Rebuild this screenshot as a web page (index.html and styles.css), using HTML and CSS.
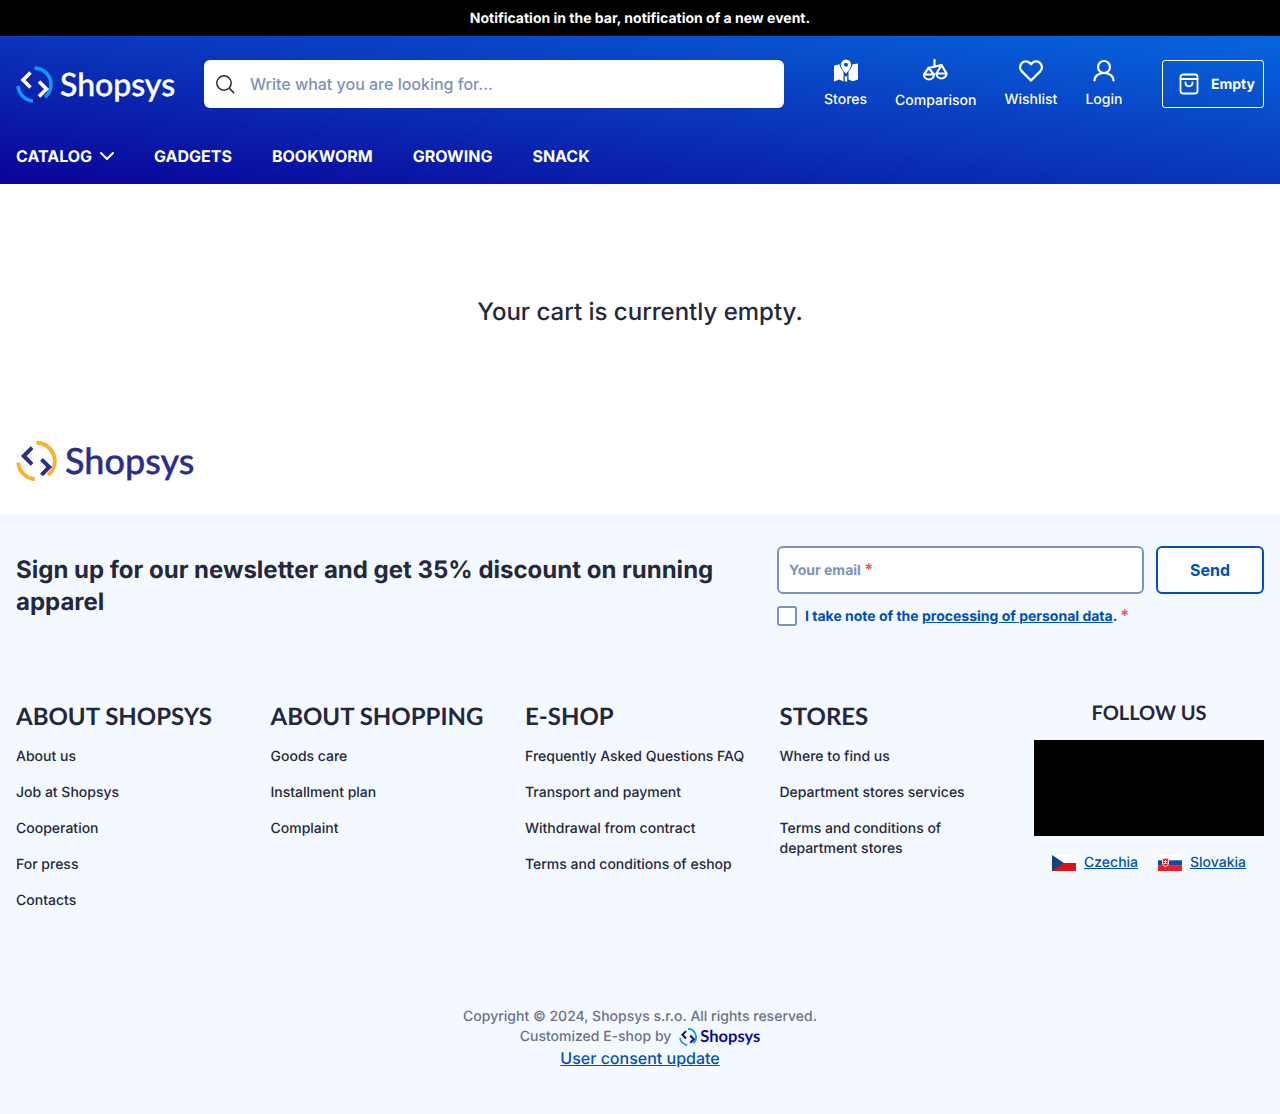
FILE: index.html
```html
<!DOCTYPE html>
<html lang="en">
<head>
  <meta charset="UTF-8" />
  <title>Cart | Shopsys</title>
  <meta name="viewport" content="width=device-width, initial-scale=1.0" />
  <link rel="stylesheet" href="styles.css">
</head>
<body>
  <div class="notice">Notification in the bar, notification of a new event.</div>

  <header class="header">
    <div class="header-top">
      <a class="logo logo-header" href="#">
        <svg class="logo-mark" viewBox="0 0 37 37" width="37" height="37" fill="none">
          <path class="logo-arc" d="M18.5 2A16.5 16.5 0 0 1 29 31.2" />
          <path class="logo-arc" d="M17 35A16.5 16.5 0 0 1 2 20" />
          <path class="logo-chev" d="M14.5 6.5L7 14l7.5 7.5M23 15.5l7.5 7.5-7.5 7.5" />
        </svg>
        <span>Shopsys</span>
      </a>

      <label class="search">
        <svg viewBox="0 0 20 20" width="20" height="20" fill="none" stroke="#25283d" stroke-width="1.5" stroke-linecap="round">
          <circle cx="9" cy="9" r="7.2" />
          <path d="M14.3 14.3L18.6 18.6" />
        </svg>
        <input type="text" placeholder="Write what you are looking for..." />
      </label>

      <nav class="tools">
        <a class="tool" href="#">
          <svg viewBox="0 0 24 24" width="24" height="24" fill="#fff">
            <path d="M12 0.5a5.2 5.2 0 0 0-5.2 5.2c0 3.2 3.3 6.6 5.2 9 1.9-2.4 5.2-5.8 5.2-9A5.2 5.2 0 0 0 12 .5zm0 7.2a2 2 0 1 1 0-4 2 2 0 0 1 0 4z" />
            <path d="M0 6.8l5.4-1.5c.2 2.4 2.3 5.2 4.1 7.3v9.9L5.3 20.5 0 22.4zM10.8 16.5l1.2 1.3 1.2-1.3v6H10.8zM14.5 12.6c1.8-2.1 3.9-4.9 4.1-7.3L24 4.6v15.9l-5.4 1.7-4.1-1.7z" />
          </svg>
          <span>Stores</span>
        </a>
        <a class="tool tool-low" href="#">
          <svg viewBox="0 0 25 23" width="25" height="23" fill="none" stroke="#fff" stroke-width="2.2" stroke-linecap="round" stroke-linejoin="round">
            <path d="M11.5 1v7M5.5 9l13-3" />
            <path d="M1 15.5h10a5 5 0 0 1-10 0zM13.5 14.5h10a5 5 0 0 1-10 0z" />
            <path d="M1 15.5L5.5 9 11 15.5M13.5 14.5L18.5 6l5 8.5" />
          </svg>
          <span>Comparison</span>
        </a>
        <a class="tool" href="#">
          <svg viewBox="0 0 24 24" width="24" height="24" fill="none" stroke="#fff" stroke-width="2.4" stroke-linejoin="round">
            <path d="M12 21.5L2.8 12.3a6 6 0 0 1 0-8.2 5.7 5.7 0 0 1 8.1 0L12 5.3l1.1-1.2a5.7 5.7 0 0 1 8.1 0 6 6 0 0 1 0 8.2z" />
          </svg>
          <span>Wishlist</span>
        </a>
        <a class="tool" href="#">
          <svg viewBox="0 0 24 24" width="24" height="24" fill="none" stroke="#fff" stroke-width="2.2" stroke-linecap="round">
            <circle cx="12" cy="8" r="6" />
            <path d="M2.5 21.5c0-4.5 4-7.5 9.5-7.5s9.5 3 9.5 7.5" />
          </svg>
          <span>Login</span>
        </a>
      </nav>

      <a class="cart" href="#">
        <svg viewBox="0 0 20 22" width="20" height="22" fill="none" stroke="#fff" stroke-width="1.8" stroke-linecap="round" stroke-linejoin="round">
          <rect x="1.5" y="1.5" width="17" height="19" rx="2.5" />
          <path d="M1.5 6h17M6.5 9.5c0 5 7 5 7 0" />
        </svg>
        <span>Empty</span>
      </a>
    </div>

    <nav class="menu">
      <a href="#">CATALOG
        <svg viewBox="0 0 14 8" width="14" height="8" fill="none" stroke="#fff" stroke-width="2" stroke-linecap="round" stroke-linejoin="round">
          <path d="M1 1l6 6 6-6" />
        </svg>
      </a>
      <a href="#">GADGETS</a>
      <a href="#">BOOKWORM</a>
      <a href="#">GROWING</a>
      <a href="#">SNACK</a>
    </nav>
  </header>

  <main class="cart-empty">
    <p>Your cart is currently empty.</p>
  </main>

  <div class="brand-row">
    <a class="logo logo-footer" href="#">
      <svg class="logo-mark" viewBox="0 0 37 37" width="41" height="42" fill="none">
        <path class="logo-arc" d="M18.5 2A16.5 16.5 0 0 1 29 31.2" />
        <path class="logo-arc" d="M17 35A16.5 16.5 0 0 1 2 20" />
        <path class="logo-chev" d="M14.5 6.5L7 14l7.5 7.5M23 17l7 7-7 7" />
      </svg>
      <span>Shopsys</span>
    </a>
  </div>

  <footer class="footer">
    <section class="newsletter">
      <h2>Sign up for our newsletter and get 35% discount on running apparel</h2>
      <form class="news-form">
        <div class="news-line">
          <label class="email">
            <span>Your email <em>*</em></span>
            <input type="email" />
          </label>
          <button type="button">Send</button>
        </div>
        <label class="consent">
          <i class="box"></i>
          <span>I take note of the <a href="#">processing of personal data</a>. <em>*</em></span>
        </label>
      </form>
    </section>

    <section class="columns">
      <div class="column">
        <h3>ABOUT SHOPSYS</h3>
        <a href="#">About us</a>
        <a href="#">Job at Shopsys</a>
        <a href="#">Cooperation</a>
        <a href="#">For press</a>
        <a href="#">Contacts</a>
      </div>
      <div class="column">
        <h3>ABOUT SHOPPING</h3>
        <a href="#">Goods care</a>
        <a href="#">Installment plan</a>
        <a href="#">Complaint</a>
      </div>
      <div class="column">
        <h3>E-SHOP</h3>
        <a href="#">Frequently Asked Questions FAQ</a>
        <a href="#">Transport and payment</a>
        <a href="#">Withdrawal from contract</a>
        <a href="#">Terms and conditions of eshop</a>
      </div>
      <div class="column">
        <h3>STORES</h3>
        <a href="#">Where to find us</a>
        <a href="#">Department stores services</a>
        <a href="#">Terms and conditions of department stores</a>
      </div>
      <div class="follow">
        <h3>FOLLOW US</h3>
        <div class="video"></div>
        <div class="langs">
          <a href="#">
            <svg viewBox="0 0 24 16" width="24" height="16">
              <rect width="24" height="8" fill="#fff" />
              <rect y="8" width="24" height="8" fill="#d7141a" />
              <path d="M0 0l12 8L0 16z" fill="#11457e" />
            </svg>
            <span>Czechia</span>
          </a>
          <a href="#">
            <svg viewBox="0 0 24 16" width="24" height="16">
              <rect width="24" height="5.4" fill="#fff" />
              <rect y="5.3" width="24" height="5.4" fill="#0b4ea2" />
              <rect y="10.7" width="24" height="5.3" fill="#ee1c25" />
              <path d="M4 3h7v5c0 2-1.8 3.2-3.5 4C5.8 11.2 4 10 4 8z" fill="#fff" />
              <path d="M4.8 3.7h5.4V8c0 1.5-1.3 2.5-2.7 3.2C6.1 10.5 4.8 9.5 4.8 8z" fill="#ee1c25" />
              <path d="M7 5h1V6h1.3v1H8V8h1.5v1H5.5V8H7V7H5.7V6H7z" fill="#fff" />
            </svg>
            <span>Slovakia</span>
          </a>
        </div>
      </div>
    </section>

    <section class="legal">
      <div>Copyright © 2024, Shopsys s.r.o. All rights reserved.</div>
      <div class="made-by">Customized E-shop by
        <a class="logo logo-small" href="#">
          <svg class="logo-mark" viewBox="0 0 37 37" width="18" height="18" fill="none">
            <path class="logo-arc" d="M18.5 2A16.5 16.5 0 0 1 29 31.2" />
            <path class="logo-arc" d="M17 35A16.5 16.5 0 0 1 2 20" />
            <path class="logo-chev" d="M14.5 6.5L7 14l7.5 7.5M23 15.5l7.5 7.5-7.5 7.5" />
          </svg>
          <span>Shopsys</span>
        </a>
      </div>
      <a class="consent-link" href="#">User consent update</a>
    </section>
  </footer>
</body>
</html>
```

FILE: styles.css
```css
* {
  box-sizing: border-box;
}

body {
  margin: 0;
  font-family: Inter, "Liberation Sans", sans-serif;
  color: #25283d;
  background-color: #fff;
  text-rendering: geometricPrecision;
}

a {
  color: inherit;
  text-decoration: none;
}

.notice {
  height: 36px;
  padding-top: 1px;
  line-height: 36px;
  text-align: center;
  font-size: 14px;
  font-weight: 700;
  color: #fff;
  background-color: #000;
}

.header {
  height: 148px;
  padding: 24px 16px 0;
  color: #fff;
  background: linear-gradient(to top right, #0a0398 0%, #0a35bb 50%, #0666de 100%);
}

.header-top {
  display: flex;
  align-items: flex-start;
}

/* logo */
.logo {
  display: flex;
  align-items: center;
  font-family: Lato, sans-serif;
  font-weight: 500;
  line-height: 1;
  white-space: nowrap;
}

.logo-mark {
  flex-shrink: 0;
}

.logo-arc {
  stroke-width: 3.5;
  stroke: #0a9bf5;
}

.logo-chev {
  stroke-width: 3.6;
  stroke: #fff;
}

.logo-header {
  width: 160px;
  height: 48px;
  gap: 7px;
  font-size: 32px;
  -webkit-text-stroke: 0.4px #fff;
}

.logo-footer {
  gap: 8px;
  font-size: 36px;
  color: #2b2d8c;
  -webkit-text-stroke: 0.4px #2b2d8c;
}

.logo-footer span,
.logo-small span {
  margin-top: -2px;
}

.logo-footer .logo-arc {
  stroke: #fbb12d;
}

.logo-footer .logo-chev {
  stroke: #2b2d8c;
}

.logo-small {
  gap: 3px;
  font-size: 16.5px;
  font-weight: 700;
  color: #0a0a9c;
}

.logo-small .logo-chev {
  stroke: #0a0a9c;
  stroke-width: 4;
}

/* search */
.search {
  display: flex;
  align-items: center;
  gap: 15px;
  width: 580px;
  height: 48px;
  margin-left: 28px;
  padding-left: 11px;
  background-color: #fff;
  border-radius: 6px;
}

.search input {
  flex: 1;
  border: 0;
  outline: 0;
  padding: 0;
  font: 500 16px Inter, sans-serif;
  background: none;
}

.search input::placeholder {
  color: #7b93bd;
  opacity: 1;
}

/* right side links */
.tools {
  display: flex;
  gap: 28px;
  margin: -1px 0 0 40px;
}

.tool {
  display: flex;
  flex-direction: column;
  align-items: center;
  gap: 8px;
  font-size: 14px;
  line-height: 17px;
  font-weight: 500;
  white-space: nowrap;
}

.tool-low {
  gap: 10px;
}

.cart {
  display: flex;
  align-items: center;
  gap: 12px;
  width: 102px;
  height: 48px;
  margin-left: auto;
  padding-left: 16px;
  font-size: 14px;
  font-weight: 700;
  border: 1px solid #fff;
  border-radius: 3px;
}

/* main menu */
.menu {
  display: flex;
  gap: 40px;
  margin-top: 37px;
  font-size: 16px;
  line-height: 20px;
  font-weight: 700;
}

.menu a {
  display: flex;
  align-items: center;
  gap: 8px;
}

/* empty cart */
.cart-empty {
  height: 256px;
  padding-bottom: 2px;
  display: flex;
  align-items: center;
  justify-content: center;
}

.cart-empty p {
  margin: 0;
  font-size: 24px;
  font-weight: 500;
}

.brand-row {
  padding-bottom: 32px;
  padding-left: 16px;
}

/* footer */
.footer {
  height: 600px;
  padding: 32px 16px 0;
  background-color: #f4f9ff;
}

.newsletter {
  display: flex;
  justify-content: space-between;
}

.newsletter h2 {
  width: 720px;
  margin: 8px 0 0;
  font-size: 24px;
  line-height: 32px;
  font-weight: 700;
}

.news-form {
  width: 487px;
}

.news-line {
  display: flex;
  gap: 12px;
}

.email {
  position: relative;
  flex: 1;
}

.email span {
  position: absolute;
  left: 12px;
  top: 15px;
  font-size: 14px;
  line-height: 17px;
  font-weight: 700;
  color: #7b93bd;
}

.email em,
.consent em {
  font-size: 16px;
  line-height: 1;
  font-style: normal;
  color: #f25a5a;
}

.email input {
  width: 100%;
  height: 48px;
  border: 2px solid #7b93bd;
  border-radius: 6px;
  background-color: #fff;
}

.news-line button {
  width: 108px;
  height: 48px;
  font: 700 16px Inter, sans-serif;
  color: #0050b8;
  background-color: #fff;
  border: 2px solid #0050b8;
  border-radius: 6px;
}

.consent {
  display: flex;
  align-items: flex-start;
  gap: 8px;
  margin-top: 12px;
  font-size: 14px;
  line-height: 20px;
  font-weight: 700;
  color: #0050b8;
}

.consent span {
  margin-top: 1px;
}

.consent a {
  text-decoration: underline;
}

.box {
  width: 20px;
  height: 20px;
  background-color: #fff;
  border: 2px solid #7b93bd;
  border-radius: 3px;
}

.columns {
  display: grid;
  grid-template-columns: repeat(4, 1fr) 230px;
  margin-top: 75px;
}

.column h3 {
  margin: 0 0 12px;
  padding-top: 1px;
  font-family: Lato, sans-serif;
  font-size: 24px;
  line-height: 28px;
  font-weight: 700;
}

.column a {
  display: block;
  width: 220px;
  padding: 4px 0;
  margin-bottom: 8px;
  font-size: 14px;
  line-height: 20px;
  font-weight: 500;
}

.column:nth-child(3) a {
  width: 240px;
}

.column:nth-child(4) a:last-child {
  width: 200px;
}

.follow {
  text-align: center;
}

.follow h3 {
  margin: 0 0 16px;
  font-family: Lato, sans-serif;
  font-size: 20px;
  line-height: 22px;
  font-weight: 700;
}

.video {
  height: 96px;
  background-color: #000;
}

.langs {
  display: flex;
  justify-content: center;
  gap: 20px;
  margin-top: 17px;
  font-size: 14px;
  line-height: 20px;
  font-weight: 500;
  color: #0050b8;
}

.langs a {
  display: flex;
  align-items: center;
  gap: 8px;
}

.langs span {
  text-decoration: underline;
}

.legal {
  margin-top: 84px;
  text-align: center;
  font-size: 14px;
  line-height: 20px;
  font-weight: 500;
  color: #6d7187;
}

.made-by {
  display: flex;
  justify-content: center;
  align-items: center;
  gap: 8px;
}

.consent-link {
  display: block;
  font-size: 16px;
  line-height: 22px;
  color: #0050b8;
  text-decoration: underline;
}
```
